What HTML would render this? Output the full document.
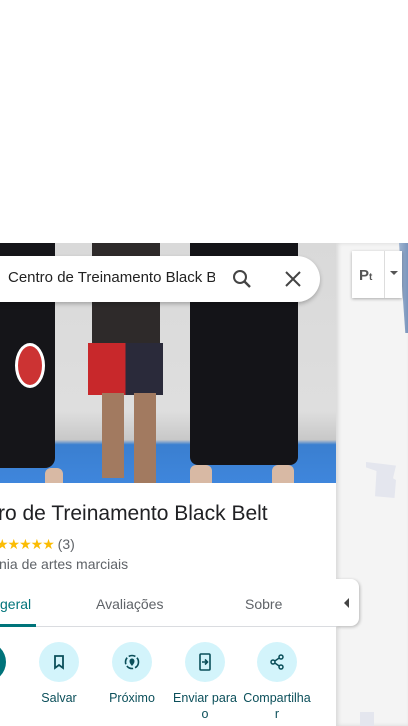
<!DOCTYPE html>
<html><head><style>
*{margin:0;padding:0;box-sizing:border-box}
body{width:408px;height:726px;overflow:hidden;background:#fff;font-family:"Liberation Sans",sans-serif;position:relative}
.abs{position:absolute}
.map{left:336px;top:243px;width:72px;height:483px;background:#f4f4f4;box-shadow:inset 2px 0 4px rgba(0,0,0,.12)}
.panel{left:0;top:243px;width:336px;height:483px;background:#fff}
.photo{left:0;top:243px;width:336px;height:240px;overflow:hidden;background:linear-gradient(#d9d9d9,#dedede 70%,#c8c8c8 82%,#3a7fd0 84%,#3f86dc)}
.btn{width:40px;height:40px;border-radius:50%;background:#d3f4fb;top:642px}
.lbl{top:690px;font-size:12.5px;color:#0b4f5a;text-align:center;line-height:16px}
</style></head><body>
<div class="abs map"></div>
<div class="abs" style="left:399px;top:243px;width:9px;height:90px;background:linear-gradient(90deg,#9fb3cf,#7a95bd);clip-path:polygon(0 0,100% 0,100% 100%,70% 100%)"></div>
<div class="abs" style="left:366px;top:462px;width:30px;height:36px;background:#e4e6ee;clip-path:polygon(0 0,100% 10%,90% 45%,100% 50%,95% 100%,30% 95%,35% 25%,0 15%)"></div>
<div class="abs" style="left:360px;top:712px;width:14px;height:14px;background:#e4e6ee"></div>
<div class="abs" style="left:352px;top:251px;width:50px;height:47px;background:#fff;box-shadow:0 1px 3px rgba(0,0,0,.3)"></div>
<div class="abs" style="left:384px;top:251px;width:1px;height:47px;background:#ddd"></div>
<div class="abs" style="left:359px;top:267px;font-size:15px;color:#555;font-weight:bold">P<span style="font-size:10px">t</span></div>
<div class="abs" style="left:390px;top:271px;width:0;height:0;border-left:4px solid transparent;border-right:4px solid transparent;border-top:4px solid #555"></div>
<div class="abs" style="left:336px;top:579px;width:23px;height:47px;background:#fff;border-radius:0 8px 8px 0;box-shadow:1px 1px 3px rgba(0,0,0,.25)"></div>
<div class="abs" style="left:344px;top:598px;width:0;height:0;border-top:5px solid transparent;border-bottom:5px solid transparent;border-right:5px solid #444"></div>
<div class="abs panel"></div>
<div class="abs photo">
 <div class="abs" style="left:-10px;top:0;width:65px;height:225px;background:#151519;border-radius:0 0 10px 10px"></div>
 <div class="abs" style="left:15px;top:100px;width:30px;height:45px;border-radius:50%;background:#c33;border:3px solid #fff"></div>
 <div class="abs" style="left:45px;top:225px;width:18px;height:15px;background:#d8b9a4;border-radius:6px 6px 0 0"></div>
 <div class="abs" style="left:92px;top:0;width:68px;height:100px;background:#2e2a2a"></div>
 <div class="abs" style="left:88px;top:100px;width:75px;height:52px;background:linear-gradient(90deg,#c8282b 50%,#2a2a3a 50%)"></div>
 <div class="abs" style="left:102px;top:150px;width:22px;height:85px;background:#a27a60"></div>
 <div class="abs" style="left:134px;top:150px;width:22px;height:90px;background:#a27a60"></div>
 <div class="abs" style="left:190px;top:0;width:108px;height:222px;background:#141418;border-radius:0 0 8px 8px"></div>
 <div class="abs" style="left:190px;top:222px;width:22px;height:18px;background:#d8b9a4;border-radius:6px 6px 0 0"></div>
 <div class="abs" style="left:272px;top:222px;width:22px;height:18px;background:#d8b9a4;border-radius:6px 6px 0 0"></div>
</div>
<div class="abs" style="left:-30px;top:256px;width:350px;height:46px;background:#fff;border-radius:23px;box-shadow:0 2px 4px rgba(0,0,0,.25)"></div>
<div class="abs" style="left:8px;top:269px;font-size:15px;color:#222;width:207px;overflow:hidden;white-space:nowrap">Centro de Treinamento Black Belt</div>
<svg class="abs" style="left:230px;top:267px" width="24" height="24" viewBox="0 0 24 24"><circle cx="10" cy="10" r="6" fill="none" stroke="#444" stroke-width="2"/><path d="M14.5 14.5L20 20" stroke="#444" stroke-width="2.4"/></svg>
<svg class="abs" style="left:283px;top:269px" width="20" height="20" viewBox="0 0 20 20"><path d="M3 3L17 17M17 3L3 17" stroke="#444" stroke-width="2"/></svg>
<div class="abs" style="left:-2px;top:502px;font-size:21px;color:#202124;white-space:nowrap">ro de Treinamento Black Belt</div>
<div class="abs" style="left:-4px;top:536px;font-size:14px;color:#202124;white-space:nowrap"><span style="color:#fbbc04;letter-spacing:-1px">★★★★★</span> <span style="color:#5f6368">(3)</span></div>
<div class="abs" style="left:-1px;top:556px;font-size:14px;color:#5f6368;white-space:nowrap">nia de artes marciais</div>
<div class="abs" style="left:0;top:596px;font-size:14px;color:#00747a">geral</div>
<div class="abs" style="left:96px;top:596px;font-size:14px;color:#5f6368">Avaliações</div>
<div class="abs" style="left:245px;top:596px;font-size:14px;color:#5f6368">Sobre</div>
<div class="abs" style="left:0;top:626px;width:336px;height:1px;background:#dadce0"></div>
<div class="abs" style="left:0;top:624px;width:36px;height:3px;background:#00747a"></div>
<div class="abs btn" style="left:-34px;background:#00737a"></div>
<div class="abs btn" style="left:39px"></div>
<div class="abs btn" style="left:112px"></div>
<div class="abs btn" style="left:185px"></div>
<div class="abs btn" style="left:257px"></div>
<svg class="abs" style="left:51px;top:654px" width="16" height="16" viewBox="0 0 16 16"><path d="M4 2H12V14L8 11L4 14Z" fill="none" stroke="#0b4f5a" stroke-width="1.8"/></svg>
<svg class="abs" style="left:124px;top:654px" width="16" height="16" viewBox="0 0 16 16"><circle cx="8" cy="8" r="6.5" fill="none" stroke="#0b4f5a" stroke-width="1.6" stroke-dasharray="7 2"/><path d="M8 12C6 9.5 5.5 8.5 5.5 7A2.5 2.5 0 0 1 10.5 7C10.5 8.5 10 9.5 8 12Z" fill="#0b4f5a"/></svg>
<svg class="abs" style="left:197px;top:653px" width="16" height="18" viewBox="0 0 16 18"><rect x="3" y="1" width="10" height="16" rx="1" fill="none" stroke="#0b4f5a" stroke-width="1.6"/><path d="M5 9H10M8 6.5L10.5 9L8 11.5" fill="none" stroke="#0b4f5a" stroke-width="1.6"/></svg>
<svg class="abs" style="left:269px;top:654px" width="16" height="16" viewBox="0 0 16 16"><circle cx="12" cy="3" r="2" fill="none" stroke="#0b4f5a" stroke-width="1.5"/><circle cx="4" cy="8" r="2" fill="none" stroke="#0b4f5a" stroke-width="1.5"/><circle cx="12" cy="13" r="2" fill="none" stroke="#0b4f5a" stroke-width="1.5"/><path d="M5.8 7L10.2 4M5.8 9L10.2 12" stroke="#0b4f5a" stroke-width="1.5"/></svg>
<div class="abs lbl" style="left:-6px;width:10px;text-align:left">s</div>
<div class="abs lbl" style="left:21px;width:76px">Salvar</div>
<div class="abs lbl" style="left:94px;width:76px">Próximo</div>
<div class="abs lbl" style="left:167px;width:76px">Enviar para<br>o</div>
<div class="abs lbl" style="left:239px;width:76px">Compartilha<br>r</div>
</body></html>
